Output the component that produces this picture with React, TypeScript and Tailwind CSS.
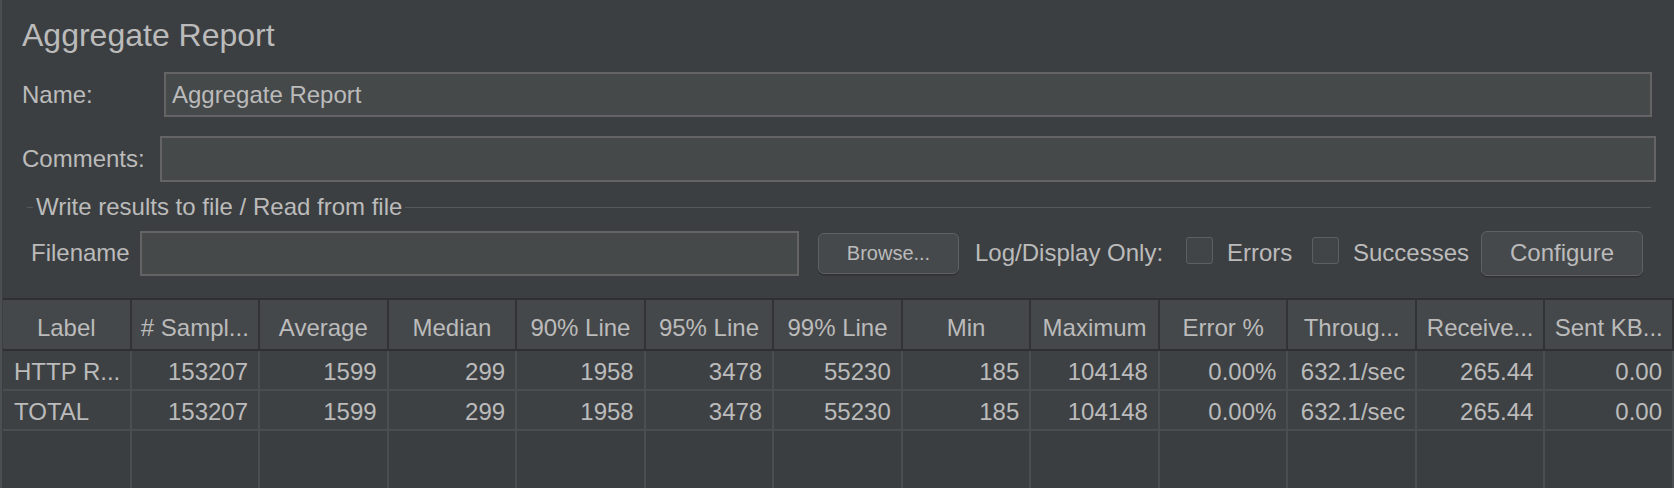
import React from 'react'

const headers = [
  'Label',
  '# Sampl...',
  'Average',
  'Median',
  '90% Line',
  '95% Line',
  '99% Line',
  'Min',
  'Maximum',
  'Error %',
  'Throug...',
  'Receive...',
  'Sent KB...',
]

const rows = [
  ['HTTP R...', '153207', '1599', '299', '1958', '3478', '55230', '185', '104148', '0.00%', '632.1/sec', '265.44', '0.00'],
  ['TOTAL', '153207', '1599', '299', '1958', '3478', '55230', '185', '104148', '0.00%', '632.1/sec', '265.44', '0.00'],
]

function Field(props: { value?: string; className?: string }) {
  return (
    <div
      className={`flex h-[45px] items-center border-2 border-[#646464] bg-[#45494a] pl-[6px] pt-px ${props.className ?? ''}`}
    >
      <span className="whitespace-nowrap leading-none">{props.value}</span>
    </div>
  )
}

function Button(props: { label: string; className?: string }) {
  return (
    <div
      className={`flex items-center justify-center rounded-[6px] border-[1.5px] border-[#5e6163] bg-[#45494b] shadow-[0_1.5px_0_#2f3133] ${props.className ?? ''}`}
    >
      <span className="whitespace-nowrap leading-none">{props.label}</span>
    </div>
  )
}

function Checkbox(props: { className?: string }) {
  return (
    <div
      className={`h-[27px] w-[27px] shrink-0 rounded-[3px] border-[1.5px] border-[#5d6062] bg-[#424547] ${props.className ?? ''}`}
    />
  )
}

export default function App() {
  return (
    <div className="flex h-[488px] w-[1674px] flex-col overflow-hidden border-l-2 border-[#4c4f51] bg-[#3c3f41] font-['Liberation_Sans',Arial,sans-serif] text-[24px] text-[#bbbbbb]">
      <div className="flex flex-col pl-[20px]">
        <div className="mt-[19px] h-[32px] text-[32px] leading-[32px]">Aggregate Report</div>

        <div className="mt-[21px] flex h-[45px] items-center">
          <span className="w-[142px] shrink-0 pt-px leading-none">Name:</span>
          <Field value="Aggregate Report" className="mr-[22px] flex-1" />
        </div>

        <div className="mt-[19px] flex h-[46px] items-center">
          <span className="w-[138px] shrink-0 leading-none">Comments:</span>
          <Field className="mr-[18px] h-[46px] flex-1" />
        </div>

        <div className="mt-[13px] ml-[5px] mr-[23px] flex h-[24px] items-center">
          <div className="h-px w-[6px] bg-[#56595b]" />
          <span className="whitespace-nowrap px-[3px] leading-none">
            Write results to file / Read from file
          </span>
          <div className="h-px flex-1 bg-[#56595b]" />
        </div>

        <div className="mt-[11px] flex h-[46px] items-center">
          <span className="ml-[9px] w-[109px] shrink-0 leading-none">Filename</span>
          <Field className="w-[659px] shrink-0" />
          <Button label="Browse..." className="ml-[19px] h-[41px] w-[141px] text-[20px]" />
          <span className="ml-[16px] w-[188px] shrink-0 whitespace-nowrap leading-none">
            Log/Display Only:
          </span>
          <Checkbox className="mb-[6px] ml-[23px]" />
          <span className="ml-[14px] w-[62px] shrink-0 leading-none">Errors</span>
          <Checkbox className="mb-[6px] ml-[23px]" />
          <span className="ml-[14px] w-[112px] shrink-0 leading-none">Successes</span>
          <Button label="Configure" className="ml-[16px] h-[45px] w-[162px]" />
        </div>
      </div>

      <div className="mt-[22px] ml-px flex flex-1 flex-col border-t-2 border-[#2e3032]">
        <div className="grid h-[51px] grid-cols-[repeat(13,minmax(0,1fr))] border-b-2 border-[#2e3032] bg-[#45484a]">
          {headers.map((h) => (
            <div
              key={h}
              className="flex items-center justify-center overflow-hidden whitespace-nowrap border-r-2 border-[#313335] pt-[6px] leading-none"
            >
              {h}
            </div>
          ))}
        </div>

        {rows.map((row, r) => (
          <div
            key={r}
            className="grid h-[40px] grid-cols-[repeat(13,minmax(0,1fr))] border-b-2 border-[#4b4e50] bg-[#3e4143]"
          >
            {row.map((cell, i) => (
              <div
                key={i}
                className={`flex items-center overflow-hidden whitespace-nowrap border-r-2 border-[#4b4e50] pt-[3px] leading-none ${
                  i === 0 ? 'justify-start pl-[11px]' : 'justify-end pr-[10px]'
                }`}
              >
                {cell}
              </div>
            ))}
          </div>
        ))}

        <div className="grid flex-1 grid-cols-[repeat(13,minmax(0,1fr))] bg-[#3b3e40]">
          {headers.map((h) => (
            <div key={h} className="border-r-2 border-[#4b4e50]" />
          ))}
        </div>
      </div>
    </div>
  )
}
